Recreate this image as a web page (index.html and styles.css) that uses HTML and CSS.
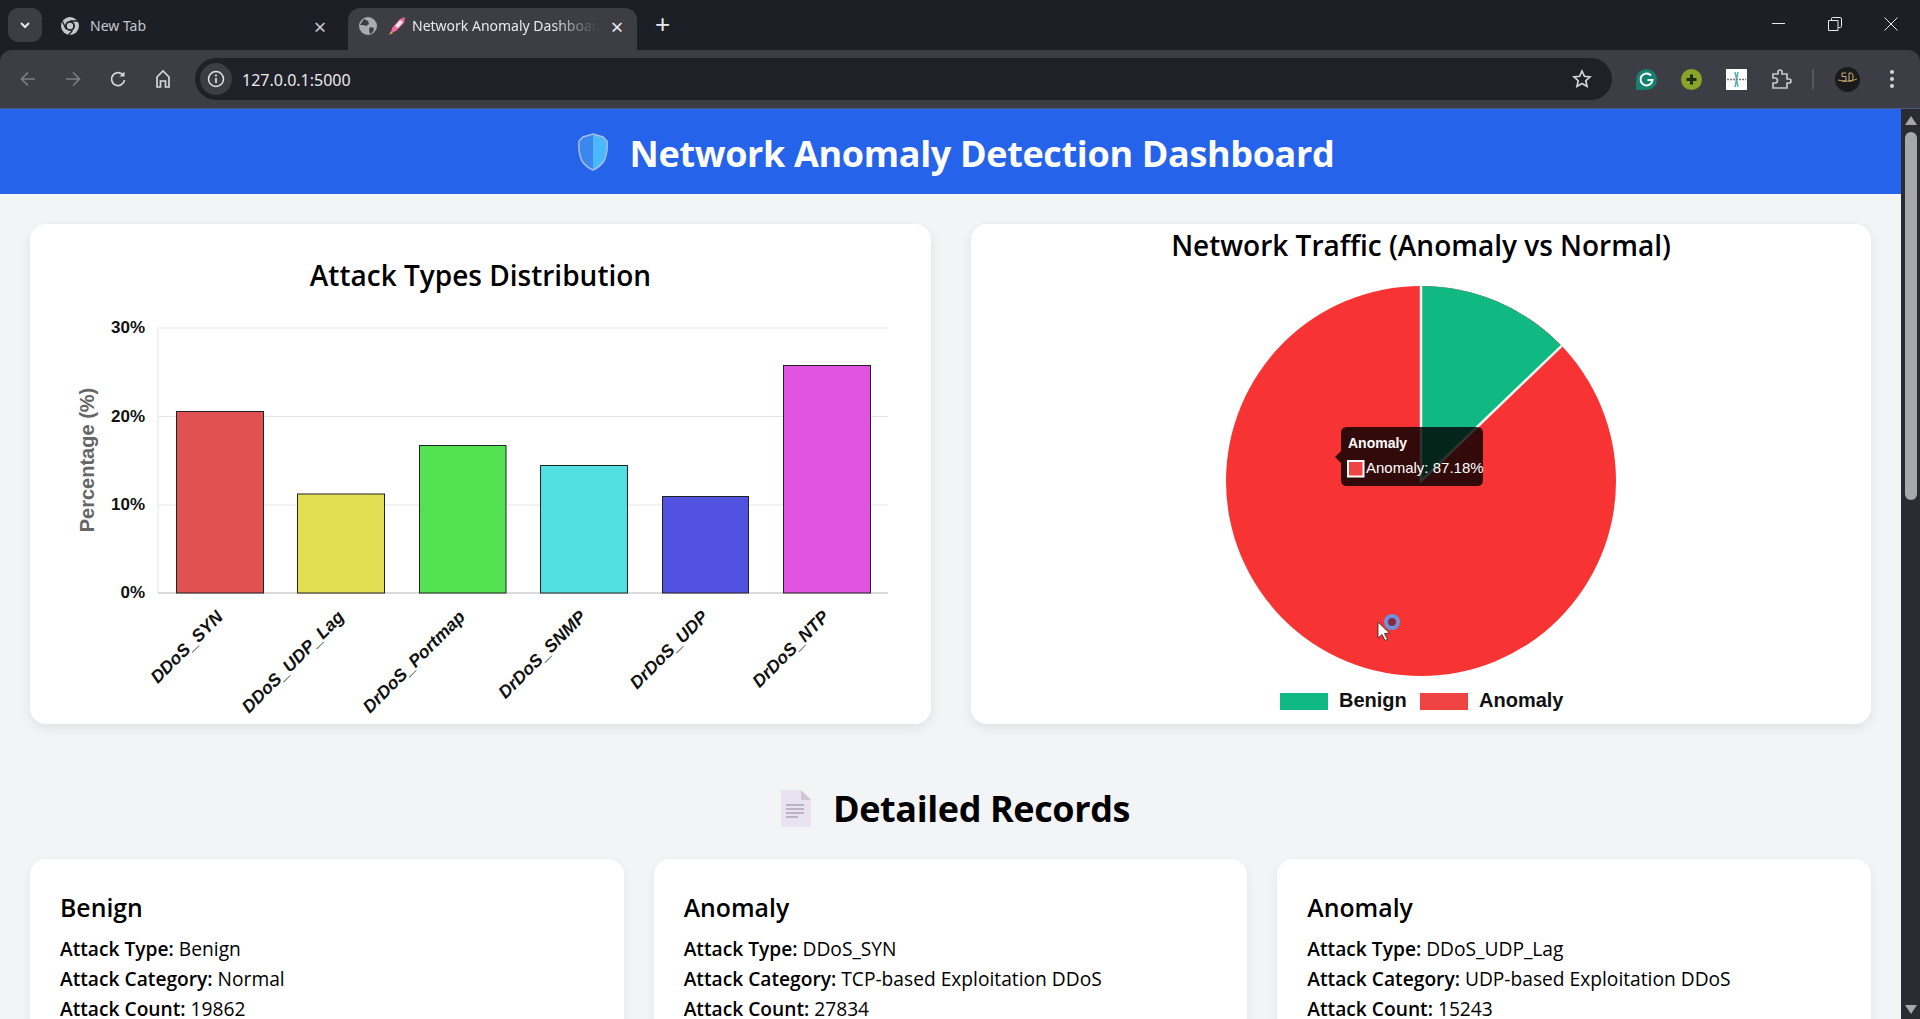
FILE: index.html
```html
<!DOCTYPE html>
<html lang="en">
<head>
  <meta charset="UTF-8">
  <title>Network Anomaly Dashboard</title>
  <link rel="stylesheet" href="styles.css">
</head>
<body>
  <!-- Browser chrome -->
  <div class="tabstrip">
    <div class="tab-search">
      <svg width="12" height="12" viewBox="0 0 12 12"><path d="M2 4l4 4 4-4" fill="none" stroke="#e8eaed" stroke-width="2"/></svg>
    </div>
    <div class="tab">
      <svg class="favicon" width="20" height="20" viewBox="0 0 20 20">
        <circle cx="10" cy="10" r="9" fill="#c4c7cc"/>
        <circle cx="10" cy="10" r="5" fill="#1d1f27"/>
        <circle cx="10" cy="10" r="3.2" fill="#c4c7cc"/>
        <path d="M10 5h8M6 13L2.5 5.5M12.5 14.5L8.5 19" stroke="#1d1f27" stroke-width="1.3"/>
      </svg>
      <span class="tab-title">New Tab</span>
      <span class="tab-close">&times;</span>
    </div>
    <div class="tab tab-active">
      <svg class="favicon" width="20" height="20" viewBox="0 0 20 20">
        <circle cx="10" cy="10" r="9" fill="#a9abb0"/>
        <path d="M6 3l4 2 1 3-3 2-3-1-3 0zM12 11l4 1-1 4-3 2-1-4z" fill="#3c3d45"/>
      </svg>
      <svg class="rocket" width="18" height="20" viewBox="0 0 18 20">
        <path d="M3 17l1-5 8-9 5-2-1 6-8 8z" fill="#f06a9a"/>
        <path d="M7 10l5-6 3 2-5 6z" fill="#f7e4ea"/>
        <path d="M1 19l2-4 2 2z" fill="#f0a040"/>
      </svg>
      <span class="tab-title tab-fade">Network Anomaly Dashboard</span>
      <span class="tab-close">&times;</span>
    </div>
    <span class="tab-new">+</span>
    <div class="window-controls">
      <svg width="14" height="14" viewBox="0 0 14 14"><path d="M0 6.5h13" stroke="#e8eaed" stroke-width="1"/></svg>
      <svg width="14" height="14" viewBox="0 0 14 14"><path d="M.5 3.5h9.500v10h-9.500zM3.500 3.500v-2q0-1 1-1h7.500q1.500 0 1.500 1.500v7.500q0 1-1 1h-2" fill="none" stroke="#e8eaed"/></svg>
      <svg width="14" height="14" viewBox="0 0 14 14"><path d="M.5.500l13 13M13.500.500l-13 13" stroke="#e8eaed" stroke-width="1"/></svg>
    </div>
  </div>

  <div class="toolbar">
    <div class="nav-btn">
      <svg width="20" height="20" viewBox="0 0 20 20"><path d="M17 10H4M10 3.500L3.500 10l6.500 6.500" fill="none" stroke="#7d7f85" stroke-width="1.700"/></svg>
    </div>
    <div class="nav-btn">
      <svg width="20" height="20" viewBox="0 0 20 20"><path d="M3 10h13M10 3.500l6.500 6.500-6.500 6.500" fill="none" stroke="#7d7f85" stroke-width="1.700"/></svg>
    </div>
    <div class="nav-btn">
      <svg width="20" height="20" viewBox="0 0 20 20"><path d="M15.500 6.500A6.500 6.500 0 1 0 16.500 11" fill="none" stroke="#d5d7da" stroke-width="1.700"/><path d="M16.500 2.500v5h-5z" fill="#d5d7da"/></svg>
    </div>
    <div class="nav-btn">
      <svg width="20" height="20" viewBox="0 0 20 20"><path d="M4 18V8l6-6 6 6v10h-3.500v-6h-5v6z" fill="none" stroke="#d5d7da" stroke-width="1.700"/></svg>
    </div>
    <div class="omnibox">
      <div class="site-info">
        <svg width="18" height="18" viewBox="0 0 18 18"><circle cx="9" cy="9" r="7.500" fill="none" stroke="#e0e2e5" stroke-width="1.500"/><path d="M9 8v5" stroke="#e0e2e5" stroke-width="1.700"/><circle cx="9" cy="5.500" r="1.100" fill="#e0e2e5"/></svg>
      </div>
      <span class="url">127.0.0.1:5000</span>
      <svg class="star" width="20" height="20" viewBox="0 0 20 20"><path d="M10 2l2.400 5.300 5.600.6-4.200 3.800 1.200 5.700-5-2.900-5 2.900 1.200-5.700L2 7.900l5.600-.6z" fill="none" stroke="#d5d7da" stroke-width="1.700"/></svg>
    </div>
    <div class="extensions">
      <svg width="21" height="21" viewBox="0 0 21 21"><path d="M10.500 0a10.500 10.500 0 1 1 0 21H1a1 1 0 0 1-1-1V10.500A10.500 10.500 0 0 1 10.500 0z" fill="#15806f"/><path d="M15 6.500a6 6 0 1 0 1.500 4.500h-5" fill="none" stroke="#fff" stroke-width="2"/></svg>
      <svg width="21" height="21" viewBox="0 0 21 21"><circle cx="10.500" cy="10.500" r="10.500" fill="#88a52a"/><path d="M10.500 5.500v10M5.500 10.500h10" stroke="#1f2a10" stroke-width="3"/></svg>
      <svg width="21" height="21" viewBox="0 0 21 21"><rect width="21" height="21" fill="#fff"/><path d="M9 3l3 15M12 3L9 18" stroke="#4fb8a0" stroke-width="1.500"/><path d="M1 10.500h19" stroke="#777" stroke-width="1.500" stroke-dasharray="2 1"/></svg>
      <svg width="21" height="21" viewBox="0 0 21 21"><path d="M2 5h5V3a2 2 0 0 1 4 0v2h5v5h2a2 2 0 0 1 0 4h-2v5H2v-5h2a2.500 2.500 0 0 0 0-5H2z" fill="none" stroke="#c4c7cc" stroke-width="1.700"/></svg>
    </div>
    <span class="tool-divider"></span>
    <div class="avatar">
      <svg width="25" height="25" viewBox="0 0 25 25"><circle cx="12.500" cy="12.500" r="12.500" fill="#1b1b1d"/><path d="M3 13q10 3 19-1" fill="none" stroke="#c9a75a" stroke-width="1"/><path d="M11 6H7v3.500h4V14H7M14 6v8h2.500l1.500-2V8l-1.500-2z" fill="none" stroke="#c9b27a" stroke-width="1"/></svg>
    </div>
    <div class="menu-dots"><span></span><span></span><span></span></div>
  </div>

  <div class="viewport">
    <div class="page">
      <header class="page-header">
        <svg class="shield" width="32" height="38" viewBox="0 0 32 38">
          <path d="M16 1l10 3 4 4q1 12-3 20-4 6-11 9z" fill="#4bb8fb"/>
          <path d="M16 1L6 4 2 8q-1 12 3 20 4 6 11 9z" fill="#3b87ee"/>
          <path d="M16 1l10 3 4 4q1 12-3 20-4 6-11 9-7-3-11-9Q1 20 2 8l4-4z" fill="none" stroke="#a9bee6" stroke-width="1.500"/>
        </svg>
        <h1>Network Anomaly Detection Dashboard</h1>
      </header>

      <main class="content">
        <div class="charts">
          <section class="chart-card">
            <h2 class="chart-title bar-title">Attack Types Distribution</h2>
            <svg class="chart" width="841" height="414" viewBox="60 310 841 414">
              <g stroke="#e5e5e5" stroke-width="1">
                <line x1="158" y1="328" x2="888" y2="328"/>
                <line x1="158" y1="416.500" x2="888" y2="416.500"/>
                <line x1="158" y1="505" x2="888" y2="505"/>
                <line x1="158" y1="328" x2="158" y2="593"/>
              </g>
              <line x1="158" y1="593" x2="888" y2="593" stroke="#cfcfcf" stroke-width="1.500"/>
              <g stroke="#222" stroke-width="1">
                <rect x="176.500" y="411.500" width="87" height="181.500" fill="#e05252"/>
                <rect x="297.500" y="494" width="87" height="99" fill="#e2e052"/>
                <rect x="419.500" y="445.500" width="86.500" height="147.500" fill="#52e252"/>
                <rect x="540.500" y="465.500" width="87" height="127.500" fill="#52e0e0"/>
                <rect x="662.500" y="496.500" width="86" height="96.500" fill="#5252e0"/>
                <rect x="783.500" y="365.500" width="87" height="227.500" fill="#e052e0"/>
              </g>
              <g class="y-ticks">
                <text x="145" y="333">30%</text>
                <text x="145" y="422">20%</text>
                <text x="145" y="510">10%</text>
                <text x="145" y="598">0%</text>
              </g>
              <text class="y-label" transform="translate(94 460) rotate(-90)">Percentage (%)</text>
              <g class="x-ticks">
                <text transform="translate(224 618) rotate(-45)">DDoS_SYN</text>
                <text transform="translate(345 618) rotate(-45)">DDoS_UDP_Lag</text>
                <text transform="translate(466 618) rotate(-45)">DrDoS_Portmap</text>
                <text transform="translate(587 618) rotate(-45)">DrDoS_SNMP</text>
                <text transform="translate(709 618) rotate(-45)">DrDoS_UDP</text>
                <text transform="translate(830 618) rotate(-45)">DrDoS_NTP</text>
              </g>
            </svg>
          </section>

          <section class="chart-card">
            <h2 class="chart-title pie-title">Network Traffic (Anomaly vs Normal)</h2>
            <svg class="chart" width="900" height="458" viewBox="971 266 900 458">
              <circle cx="1421" cy="481" r="195" fill="#f83333"/>
              <path d="M1421 481V286A195 195 0 0 1 1561.600 345.900z" fill="#10b981"/>
              <path d="M1421 286v195L1561.600 345.900" fill="none" stroke="#f2f4f3" stroke-width="2.500"/>
              <!-- tooltip -->
              <path d="M1347 427h130q6 0 6 6v47q0 6-6 6h-130q-6 0-6-6v-17l-6-6 6-6v-18q0-6 6-6z" fill="#000" fill-opacity="0.8"/>
              <text class="tip-title" x="1348" y="448">Anomaly</text>
              <rect x="1348" y="461" width="15.500" height="15.500" fill="#ef4444" stroke="#fff" stroke-width="2"/>
              <text class="tip-body" x="1366" y="473">Anomaly: 87.18%</text>
              <!-- recording cursor -->
              <circle cx="1392" cy="622" r="6" fill="#8a2a3a" stroke="#6b93e0" stroke-width="4"/>
              <path d="M1378 622v16l4-3.500 3 6 2.500-1.200-3-5.800 5-.5z" fill="#fff" stroke="#222" stroke-width="0.800"/>
              <!-- legend -->
              <rect x="1280" y="693" width="48" height="17" fill="#10b981"/>
              <text class="legend-text" x="1339" y="707">Benign</text>
              <rect x="1420" y="693" width="48" height="17" fill="#ef4444"/>
              <text class="legend-text" x="1479" y="707">Anomaly</text>
            </svg>
          </section>
        </div>

        <div class="records-head">
          <svg width="30" height="37" viewBox="0 0 30 37">
            <path d="M0 0h20l10 10v27H0z" fill="#e9e2f1"/>
            <path d="M20 0l10 10H20z" fill="#cfc5d9"/>
            <path d="M5 15h18M5 19h18M5 23h18M5 27h12" stroke="#bdb3c6" stroke-width="2"/>
          </svg>
          <h2>Detailed Records</h2>
        </div>

        <div class="records">
          <article class="record">
            <h3>Benign</h3>
            <p><b>Attack Type:</b> Benign</p>
            <p><b>Attack Category:</b> Normal</p>
            <p><b>Attack Count:</b> 19862</p>
          </article>
          <article class="record">
            <h3>Anomaly</h3>
            <p><b>Attack Type:</b> DDoS_SYN</p>
            <p><b>Attack Category:</b> TCP-based Exploitation DDoS</p>
            <p><b>Attack Count:</b> 27834</p>
          </article>
          <article class="record">
            <h3>Anomaly</h3>
            <p><b>Attack Type:</b> DDoS_UDP_Lag</p>
            <p><b>Attack Category:</b> UDP-based Exploitation DDoS</p>
            <p><b>Attack Count:</b> 15243</p>
          </article>
        </div>
      </main>
    </div>

    <div class="scrollbar">
      <svg width="12" height="9" viewBox="0 0 12 9"><path d="M6 0l6 9H0z" fill="#a8a8a8"/></svg>
      <div class="scroll-thumb"></div>
      <svg class="scroll-down" width="12" height="9" viewBox="0 0 12 9"><path d="M6 9l6-9H0z" fill="#a8a8a8"/></svg>
    </div>
  </div>
</body>
</html>
```

FILE: styles.css
```css
* {
  box-sizing: border-box;
}

html, body {
  height: 100%;
}

body {
  margin: 0;
  display: flex;
  flex-direction: column;
  overflow: hidden;
  font-family: "Open Sans", "Noto Sans", sans-serif;
  color: #000;
  background: #1d1f27;
}

/* Tab strip */
.tabstrip {
  display: flex;
  align-items: flex-end;
  flex: none;
  height: 50px;
  padding-left: 8px;
  background: #1d1f27;
}

.tab-search {
  display: flex;
  align-items: center;
  justify-content: center;
  width: 34px;
  height: 34px;
  margin-bottom: 8px;
  border-radius: 10px;
  background: #3c3d45;
}

.tab {
  display: flex;
  align-items: center;
  width: 298px;
  height: 42px;
  margin-left: 8px;
  padding: 0 18px 7px 10px;
  color: #c4c7cc;
  font-family: "Noto Sans", sans-serif;
  font-size: 14px;
}

.tab-active {
  width: 289px;
  margin-left: 0;
  padding: 0 10px 7px 10px;
  border-radius: 12px 12px 0 0;
  background: #3c3d45;
  color: #e8eaed;
}

.favicon {
  flex: none;
  margin-right: 10px;
}

.rocket {
  flex: none;
  margin-right: 6px;
}

.tab-title {
  flex: 1;
  overflow: hidden;
  white-space: nowrap;
}

.tab-fade {
  -webkit-mask-image: linear-gradient(90deg, #000 72%, transparent 95%);
  mask-image: linear-gradient(90deg, #000 72%, transparent 95%);
}

.tab-close {
  flex: none;
  width: 20px;
  font-size: 22px;
  line-height: 20px;
  text-align: center;
}

.tab-new {
  align-self: center;
  margin: 0 0 3px 18px;
  color: #e8eaed;
  font-family: "Liberation Sans", sans-serif;
  font-size: 26px;
  line-height: 1;
}

.window-controls {
  display: flex;
  gap: 42px;
  align-self: flex-start;
  margin: 17px 22px 0 auto;
}

/* Toolbar */
.toolbar {
  display: flex;
  align-items: center;
  flex: none;
  height: 59px;
  padding: 0 26px 0 5px;
  border-radius: 12px 12px 0 0;
  border-bottom: 1px solid #4a5a80;
  background: #3c3d45;
}

.nav-btn {
  display: flex;
  align-items: center;
  justify-content: center;
  flex: none;
  width: 45px;
}

.omnibox {
  display: flex;
  align-items: center;
  flex: 1;
  height: 42px;
  margin: 0 24px 0 10px;
  padding: 0 20px 0 5px;
  border-radius: 21px;
  background: #1f2028;
}

.site-info {
  display: flex;
  align-items: center;
  justify-content: center;
  width: 32px;
  height: 32px;
  border-radius: 50%;
  background: #3c3d45;
}

.url {
  flex: 1;
  margin-left: 10px;
  padding-top: 1px;
  color: #e8eaed;
  font-family: "Noto Sans", sans-serif;
  font-size: 16px;
}

.extensions {
  display: flex;
  gap: 24px;
}

.tool-divider {
  width: 2px;
  height: 20px;
  margin-left: 20px;
  background: #55565e;
}

.avatar {
  display: flex;
  margin-left: 21px;
}

.menu-dots {
  display: flex;
  flex-direction: column;
  gap: 3px;
  margin-left: 30px;
}

.menu-dots span {
  width: 4px;
  height: 4px;
  border-radius: 50%;
  background: #d5d7da;
}

/* Page area */
.viewport {
  display: flex;
  flex: 1;
  min-height: 0;
}

.page {
  flex: 1;
  min-width: 0;
  overflow: hidden;
  background: #f3f4f6;
}

.scrollbar {
  display: flex;
  flex-direction: column;
  align-items: center;
  flex: none;
  width: 19px;
  padding-top: 7px;
  background: #2b2c31;
}

.scroll-thumb {
  width: 12px;
  height: 368px;
  margin-top: 7px;
  border-radius: 6px;
  background: #a8a8a8;
}

.scroll-down {
  margin-top: auto;
  margin-bottom: 5px;
}

.page-header {
  display: flex;
  align-items: center;
  justify-content: center;
  gap: 21px;
  height: 85px;
  padding: 1px 0 0 10px;
  background: #2563eb;
  color: #fff;
}

.page-header h1 {
  margin: 2px 0 0;
  font-size: 36px;
  font-weight: 700;
  letter-spacing: -0.35px;
}

.content {
  padding: 30px 30px 0;
}

.charts {
  display: grid;
  grid-template-columns: 901px 900px;
  gap: 40px;
}

.chart-card {
  height: 500px;
  border-radius: 16px;
  background: #fff;
  box-shadow: 0 4px 12px rgba(0, 0, 0, 0.08);
}

.chart-title {
  margin: 0;
  font-size: 28px;
  font-weight: 600;
  line-height: 38px;
  text-align: center;
}

.bar-title {
  height: 86px;
  padding-top: 32px;
}

.pie-title {
  height: 42px;
  padding-top: 2px;
}

.chart {
  display: block;
  margin: 0 auto;
  font-family: "Liberation Sans", Arial, sans-serif;
}

.bar-title + .chart {
  margin-left: 30px;
}

.y-ticks text {
  fill: #111;
  font-size: 17px;
  font-weight: 700;
  text-anchor: end;
}

.y-label {
  fill: #666;
  font-size: 20px;
  font-weight: 700;
  text-anchor: middle;
}

.x-ticks text {
  fill: #111;
  font-size: 17.600px;
  font-weight: 700;
  font-style: italic;
  text-anchor: end;
}

.tip-title {
  fill: #fff;
  font-size: 14px;
  font-weight: 700;
}

.tip-body {
  fill: #fff;
  font-size: 15px;
}

.legend-text {
  fill: #111;
  font-size: 20px;
  font-weight: 700;
}

/* Detailed records */
.records-head {
  display: flex;
  align-items: center;
  justify-content: center;
  gap: 22px;
  height: 135px;
  padding: 34px 0 0 10px;
}

.records-head h2 {
  margin: 0;
  font-size: 36px;
  font-weight: 700;
  letter-spacing: -0.4px;
}

.records {
  display: grid;
  grid-template-columns: repeat(3, 1fr);
  gap: 30px;
}

.record {
  padding: 31px 30px;
  border-radius: 16px;
  background: #fff;
  box-shadow: 0 4px 12px rgba(0, 0, 0, 0.06);
}

.record h3 {
  margin: 0 0 10px;
  font-size: 24.800px;
  font-weight: 600;
  line-height: 34px;
}

.record p {
  margin: 0;
  font-size: 19.200px;
  line-height: 30px;
}

.record b {
  font-weight: 600;
}
```
